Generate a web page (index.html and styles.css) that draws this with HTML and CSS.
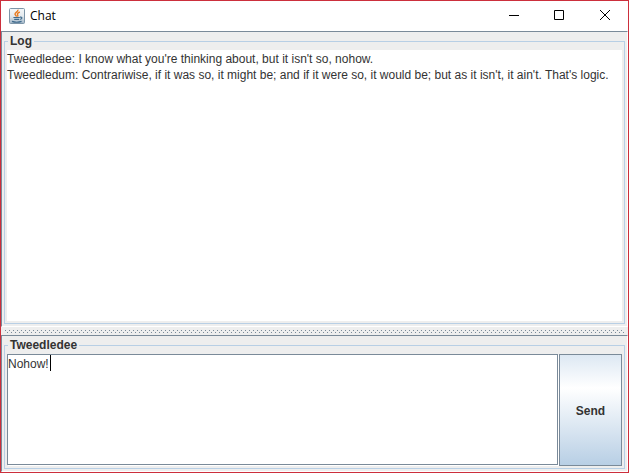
FILE: index.html
```html
<!DOCTYPE html>
<html lang="en">
<head>
  <meta charset="UTF-8" />
  <title>Chat</title>
  <meta name="viewport" content="width=device-width, initial-scale=1.0">
  <link rel="stylesheet" href="styles.css">
</head>
<body>
  <div class="window">
    <header class="titlebar">
      <svg class="app-icon" width="16" height="16" viewBox="0 0 16 16" fill="none">
        <defs>
          <linearGradient id="icon-bg" x1="0" y1="0" x2="0" y2="1">
            <stop offset="0" stop-color="#f4f7f9" />
            <stop offset="0.5" stop-color="#e4eaee" />
            <stop offset="1" stop-color="#9fb4c6" />
          </linearGradient>
        </defs>
        <rect x="0.5" y="0.5" width="15" height="15" rx="1" fill="url(#icon-bg)" stroke="#7d95a8" />
        <path d="M8.8 1.6c1 2-3 2.8-2.8 4.6.1 1 1.2 1.5 1.6 2.4M10.8 4c-1.8.8-2.8 1.6-2.2 2.6.4.7.5 1.2-.1 2" stroke="#e87a1e" stroke-width="1.4" />
        <path d="M4.4 9.5h6.4M5.2 11.4h5M3 13.4c2.4.9 7 .9 9.6 0M11 9.2c2.4-.6 2.6 1.6.2 2.2" stroke="#3f6a8c" stroke-width="1.2" />
      </svg>
      <h1 class="title">Chat</h1>
      <div class="controls">
        <button type="button" aria-label="Minimize">
          <svg width="12" height="12" viewBox="0 0 12 12"><path d="M2 6.5h10" stroke="#000" /></svg>
        </button>
        <button type="button" aria-label="Maximize">
          <svg width="12" height="12" viewBox="0 0 12 12"><path d="M1.5 1.5h9v9h-9z" fill="none" stroke="#000" /></svg>
        </button>
        <button type="button" aria-label="Close">
          <svg width="12" height="12" viewBox="0 0 12 12"><path d="M1 1l10 10M11 1L1 11" stroke="#000" /></svg>
        </button>
      </div>
    </header>

    <main class="pane log-pane">
      <fieldset class="group">
        <legend>Log</legend>
        <div class="log">
          <p>Tweedledee: I know what you're thinking about, but it isn't so, nohow.</p>
          <p>Tweedledum: Contrariwise, if it was so, it might be; and if it were so, it would be; but as it isn't, it ain't. That's logic.</p>
        </div>
      </fieldset>
    </main>

    <div class="divider"></div>

    <form class="pane entry-pane">
      <fieldset class="group">
        <legend id="user-name">Tweedledee</legend>
        <div class="entry">
          <div class="message">
            <textarea aria-labelledby="user-name">Nohow!</textarea>
            <span class="caret"></span>
          </div>
          <button type="button" class="send">Send</button>
        </div>
      </fieldset>
    </form>
  </div>
</body>
</html>
```

FILE: styles.css
```css
* {
  box-sizing: border-box;
}

body {
  margin: 0;
  font-family: "Liberation Sans", Arial, sans-serif;
  font-size: 12px;
  line-height: 16px;
  color: #333333;
}

.window {
  display: flex;
  flex-direction: column;
  height: 100vh;
  border: 1px solid #cc2f3c;
  background-color: #eeeeee;
}

/* title bar */
.titlebar {
  display: flex;
  align-items: center;
  height: 30px;
  padding-left: 8px;
  background-color: white;
  color: black;
}

.title {
  flex: 1;
  margin: 0 0 0 5px;
  font-family: "Open Sans", "Noto Sans", sans-serif;
  font-size: 12px;
  font-weight: normal;
}

.controls {
  display: flex;
  height: 100%;
}

.controls button {
  display: flex;
  align-items: center;
  justify-content: center;
  width: 46px;
  padding: 0 0 2px;
  border: none;
  background: none;
}

.controls button:hover {
  background-color: #e5e5e5;
}

/* split pane */
.pane {
  display: flex;
  padding: 2px;
  border: 1px solid;
  border-color: #7a8a99 white white #7a8a99;
}

.log-pane {
  flex: 1;
  min-height: 0;
}

.entry-pane {
  height: 29%;
}

.group {
  display: flex;
  flex: 1;
  min-width: 0;
  margin: 0;
  padding: 2px;
  border: 1px solid #b8cfe5;
}

.group legend {
  margin-left: 1px;
  padding: 0 2px;
  font-weight: bold;
  line-height: 14px;
}

.log {
  flex: 1;
  padding-top: 1px;
  overflow: hidden;
  background-color: white;
  white-space: nowrap;
}

.log p {
  margin: 0;
}

/* two staggered rows of grip dots */
.divider {
  height: 8px;
  padding: 3px 4px 2px;
  background-image:
    conic-gradient(from 270deg at 1px 1px, #7a8a99 90deg, transparent 0),
    conic-gradient(from 270deg at 1px 1px, #7a8a99 90deg, transparent 0);
  background-position: 0 0, 2px 2px;
  background-size: 4px 4px;
  background-origin: content-box;
  background-clip: content-box;
}

/* message entry */
.entry {
  display: flex;
  flex: 1;
  gap: 1px;
}

.message {
  position: relative;
  display: flex;
  flex: 1;
  margin-bottom: 1px;
  border: 1px solid #7a8a99;
  box-shadow: 1px 1px white;
}

.message textarea {
  flex: 1;
  padding: 1px 0 0;
  border: none;
  outline: none;
  resize: none;
  font: inherit;
  color: inherit;
}

.caret {
  position: absolute;
  top: 0;
  left: 42px;
  width: 1px;
  height: 16px;
  background-color: black;
}

.send {
  width: 63px;
  padding: 2px 0 0;
  border: 1px solid #7a8a99;
  background: linear-gradient(#dde8f3, white 30%, #b8cfe5);
  font: inherit;
  font-weight: bold;
  color: inherit;
}
```
